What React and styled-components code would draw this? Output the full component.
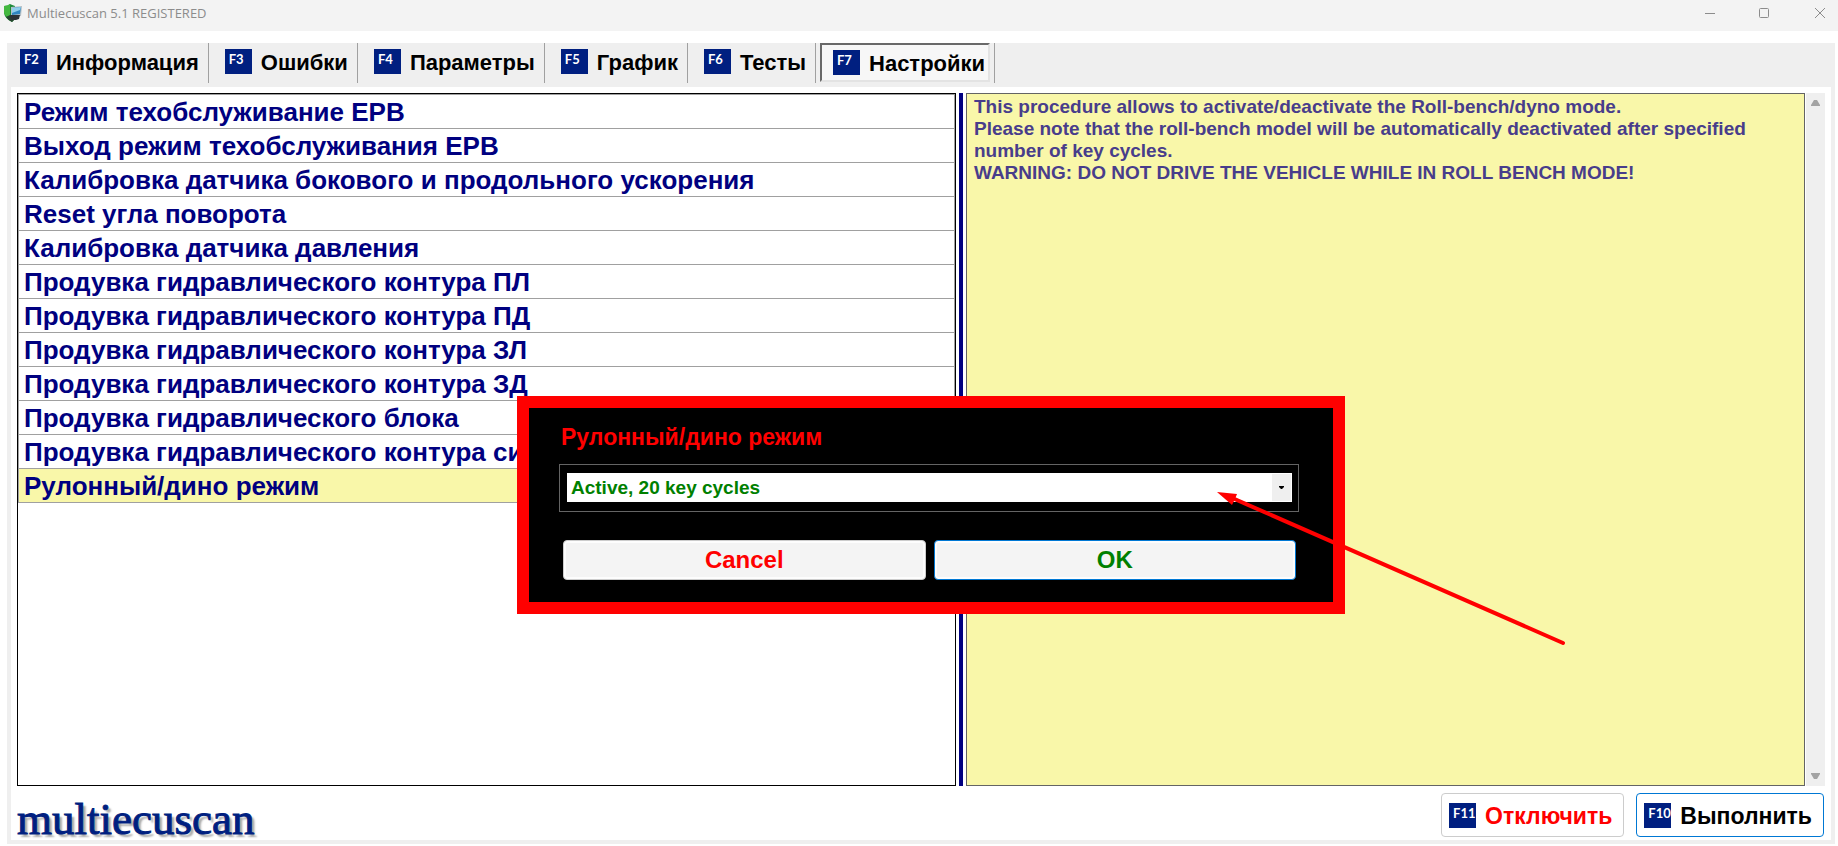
import { useState } from "react";
import styled, { createGlobalStyle } from "styled-components";

// STYLING
const GlobalStyle = createGlobalStyle`
  * {
    box-sizing: border-box;
  }
  body {
    margin: 0;
    background: #fff;
    font-family: "Liberation Sans", Arial, sans-serif;
  }
  button, select {
    font-family: inherit;
    font-weight: 700;
  }
`;
const Page = styled.div`
  position: relative;
  display: flex;
  flex-direction: column;
  min-height: 100vh;
  padding-bottom: 2px;
`;
const TitleBar = styled.header`
  display: flex;
  align-items: center;
  height: 31px;
  padding: 0 4px 6px;
  gap: 5px;
  background: #f3f3f3;
`;
const Title = styled.h1`
  flex: 1;
  margin: 0;
  color: #8c8c8c;
  font-family: "Open Sans", sans-serif;
  font-size: 13px;
  font-weight: 400;
`;
const WindowButtons = styled.div`
  display: flex;
`;
const WindowButton = styled.button`
  display: flex;
  align-items: center;
  justify-content: center;
  width: 54px;
  height: 24px;
  padding: 0;
  border: none;
  background: none;

  &:last-child {
    width: 43px;
    padding-left: 15px;
  }
`;
const Frame = styled.main`
  display: flex;
  flex: 1;
  flex-direction: column;
  margin: 12px 3px 0 7px;
  border: 4px solid #efefef;
  border-top: none;
`;
const TabBar = styled.nav`
  display: flex;
  height: 44px;
  margin: 0 -4px;
  background: #efefef;
`;
const TabCell = styled.div`
  height: 40px;
  padding: 0 4px;
  border-right: 1px solid #a0a0a0;

  &:first-child {
    padding-left: 1px;
  }
`;
const Tab = styled.button`
  display: flex;
  align-items: center;
  gap: 9px;
  height: 39px;
  padding: ${(props) => (props.$active ? "0 3px 0 11px" : "0 3px 2px 10px")};
  border: 2px solid transparent;
  border-color: ${(props) =>
    props.$active ? "#696969 #e3e3e3 #e3e3e3 #696969" : "transparent"};
  background: ${(props) => (props.$active ? "#f7f7f7" : "none")};
  color: #000;
  font-size: 22px;
  white-space: nowrap;
`;
const Key = styled.span`
  width: 27px;
  height: 25px;
  padding-left: 4px;
  background: #001f80;
  color: #fff;
  font-family: Lato, sans-serif;
  font-size: 13px;
  line-height: 20px;
  text-align: left;
`;
const Caption = styled.span`
  padding-top: 2px;
`;
const Panes = styled.div`
  display: grid;
  flex: 1;
  grid-template-columns: 939fr 4px 859fr;
  column-gap: 3px;
  padding: 6px 6px 0;
`;
const List = styled.ul`
  margin: 0;
  padding: 0;
  border: 1px solid #000;
  list-style: none;
`;
const Row = styled.li`
  border: 1px solid #a0a0a0;
  border-top: none;

  &:first-child {
    border-top: 1px solid #a0a0a0;
  }
`;
const RowButton = styled.button`
  display: block;
  width: 100%;
  height: 33px;
  padding: 2px 5px 0;
  border: none;
  background: ${(props) => (props.$selected ? "#f9f7a9" : "#fff")};
  color: #000080;
  font-size: 26px;
  line-height: 31px;
  text-align: left;
  white-space: nowrap;
`;
const Splitter = styled.div`
  background: #000080;
`;
const InfoPane = styled.section`
  display: flex;
  gap: 1px;
`;
const Info = styled.div`
  flex: 1;
  padding: 2px 7px;
  border: 1px solid #646464;
  background: #f9f7a9;
  color: #483d8b;
  font-size: 19px;
  font-weight: 700;
  line-height: 22px;
`;
const Line = styled.p`
  margin: 0;
`;
const Scrollbar = styled.div`
  display: flex;
  flex-direction: column;
  align-items: center;
  justify-content: space-between;
  width: 19px;
  padding: 7px 0;
  background: #efefef;
`;
const Footer = styled.footer`
  display: flex;
  align-items: flex-start;
  height: 54px;
  padding: 7px 7px 0 6px;
  gap: 12px;
`;
const Logo = styled.div`
  flex: 1;
  color: #001f80;
  font-family: "Liberation Serif", serif;
  font-size: 45px;
  line-height: 52px;
  text-shadow: 3px 3px 2px #a8a8a8;
  -webkit-text-stroke: 1px #001f80;
`;
const ActionButton = styled.button`
  display: flex;
  align-items: center;
  gap: 9px;
  height: 44px;
  padding: 0 11px 0 7px;
  border: 1px solid ${(props) => (props.$primary ? "#0078d4" : "#cccccc")};
  border-radius: 4px;
  background: #fff;
  color: ${(props) => (props.$primary ? "#000" : "#ff0000")};
  font-size: 23px;
`;
const Dialog = styled.form`
  position: absolute;
  top: 396px;
  left: 517px;
  width: 828px;
  padding: 15px 34px 22px 30px;
  border: 12px solid #ff0000;
  background: #000;
`;
const DialogTitle = styled.label`
  display: block;
  padding: 0 2px;
  color: #ff0000;
  font-size: 23px;
  font-weight: 700;
  line-height: 28px;
`;
const Group = styled.div`
  position: relative;
  height: 48px;
  margin: 13px 0 28px;
  padding: 8px 6px 9px 7px;
  border: 1px solid #646464;
`;
const Select = styled.select`
  display: block;
  width: 100%;
  height: 29px;
  padding: 0 24px 0 4px;
  border: none;
  border-radius: 0;
  appearance: none;
  background: linear-gradient(#efefef, #efefef) right 1px center / 19px 27px
    no-repeat #fff;
  color: #008000;
  font-size: 19px;
`;
const Caret = styled.svg`
  position: absolute;
  top: 21px;
  right: 14px;
  pointer-events: none;
`;
const DialogButtons = styled.div`
  display: grid;
  grid-template-columns: 1fr 1fr;
  gap: 8px;
  padding: 0 3px 0 4px;
`;
const DialogButton = styled.button`
  height: 40px;
  padding: 0;
  border: 1px solid ${(props) => (props.$primary ? "#0078d4" : "#cccccc")};
  border-radius: 4px;
  background: #f4f4f4;
  box-shadow: inset 0 0 0 2px #fdfdfd;
  color: ${(props) => (props.$primary ? "#008000" : "#ff0000")};
  font-size: 24px;
`;
const Pointer = styled.svg`
  position: absolute;
  top: 485px;
  left: 1210px;
  pointer-events: none;
`;

const tabs = [
  { key: "F2", label: "Информация" },
  { key: "F3", label: "Ошибки" },
  { key: "F4", label: "Параметры" },
  { key: "F5", label: "График" },
  { key: "F6", label: "Тесты" },
  { key: "F7", label: "Настройки" },
];

const procedures = [
  "Режим техобслуживание ЕРВ",
  "Выход режим техобслуживания ЕРВ",
  "Калибровка датчика бокового и продольного ускорения",
  "Reset угла поворота",
  "Калибровка датчика давления",
  "Продувка гидравлического контура ПЛ",
  "Продувка гидравлического контура ПД",
  "Продувка гидравлического контура ЗЛ",
  "Продувка гидравлического контура ЗД",
  "Продувка гидравлического блока",
  "Продувка гидравлического контура си",
  "Рулонный/дино режим",
];

const AppIcon = () => (
  <svg width="18" height="18" viewBox="0 0 18 18">
    <path d="M0 2Q4 2 6 0Q8 1 11 2V15L8 18Q1 15 0 9Z" fill="#1f8a3a" />
    <path d="M0 2Q4 2 6 0V15Q1 12 0 9Z" fill="#43b83f" />
    <path d="M2 13Q4 16 8 18L11 15L6 11Z" fill="#27452f" />
    <path d="M7 3L18 2L17 12L7 13Z" fill="#b4bfc6" />
    <path d="M8 4L17 3L16 10L8 11Z" fill="#2f86c0" />
    <path d="M8 4L17 3L16 6L8 9Z" fill="#8fcdea" />
    <path d="M6 11H16L15 15L12 16H7Z" fill="#2d3336" />
  </svg>
);

const App = () => {
  const [activeTab, setActiveTab] = useState("F7");
  const [selected, setSelected] = useState(11);

  return (
    <Page>
      <GlobalStyle />
      <TitleBar>
        <AppIcon />
        <Title>Multiecuscan 5.1 REGISTERED</Title>
        <WindowButtons>
          <WindowButton type="button" aria-label="Minimize">
            <svg width="10" height="10" stroke="#8c8c8c">
              <path d="M0 5.5H10" />
            </svg>
          </WindowButton>
          <WindowButton type="button" aria-label="Maximize">
            <svg width="10" height="10" fill="none" stroke="#8c8c8c">
              <rect x="0.5" y="0.5" width="9" height="9" rx="1" />
            </svg>
          </WindowButton>
          <WindowButton type="button" aria-label="Close">
            <svg width="10" height="10" stroke="#8c8c8c">
              <path d="M0 0L10 10M10 0L0 10" />
            </svg>
          </WindowButton>
        </WindowButtons>
      </TitleBar>
      <Frame>
        <TabBar>
          {tabs.map((tab) => (
            <TabCell key={tab.key}>
              <Tab
                type="button"
                $active={tab.key === activeTab}
                onClick={() => setActiveTab(tab.key)}
              >
                <Key>{tab.key}</Key>
                <Caption>{tab.label}</Caption>
              </Tab>
            </TabCell>
          ))}
        </TabBar>
        <Panes>
          <List>
            {procedures.map((name, index) => (
              <Row key={name}>
                <RowButton
                  type="button"
                  $selected={index === selected}
                  onClick={() => setSelected(index)}
                >
                  {name}
                </RowButton>
              </Row>
            ))}
          </List>
          <Splitter />
          <InfoPane>
            <Info>
              <Line>
                This procedure allows to activate/deactivate the Roll-bench/dyno
                mode.
              </Line>
              <Line>
                Please note that the roll-bench model will be automatically
                deactivated after specified number of key cycles.
              </Line>
              <Line>
                WARNING: DO NOT DRIVE THE VEHICLE WHILE IN ROLL BENCH MODE!
              </Line>
            </Info>
            <Scrollbar>
              <svg width="9" height="6" fill="#a3a3a3">
                <path d="M0 6V5L3 0H6L9 5V6Z" />
              </svg>
              <svg width="9" height="6" fill="#a3a3a3">
                <path d="M0 0V1L3 6H6L9 1V0Z" />
              </svg>
            </Scrollbar>
          </InfoPane>
        </Panes>
        <Footer>
          <Logo>multiecuscan</Logo>
          <ActionButton type="button">
            <Key>F11</Key>
            <Caption>Отключить</Caption>
          </ActionButton>
          <ActionButton type="button" $primary>
            <Key>F10</Key>
            <Caption>Выполнить</Caption>
          </ActionButton>
        </Footer>
      </Frame>
      <Dialog onSubmit={(e) => e.preventDefault()}>
        <DialogTitle htmlFor="mode">Рулонный/дино режим</DialogTitle>
        <Group>
          <Select id="mode" name="mode">
            <option>Active, 20 key cycles</option>
          </Select>
          <Caret width="5" height="3">
            <path d="M0 0H5V1L3 3H2L0 1Z" fill="#000" />
          </Caret>
        </Group>
        <DialogButtons>
          <DialogButton type="button">Cancel</DialogButton>
          <DialogButton type="submit" $primary>
            OK
          </DialogButton>
        </DialogButtons>
      </Dialog>
      <Pointer width="360" height="165" fill="#ff0000">
        <path d="M20 12L353 158" stroke="#ff0000" strokeWidth="4" strokeLinecap="round" />
        <path d="M7 7L27 9L25 14L22 20Z" />
      </Pointer>
    </Page>
  );
};

export default App;
